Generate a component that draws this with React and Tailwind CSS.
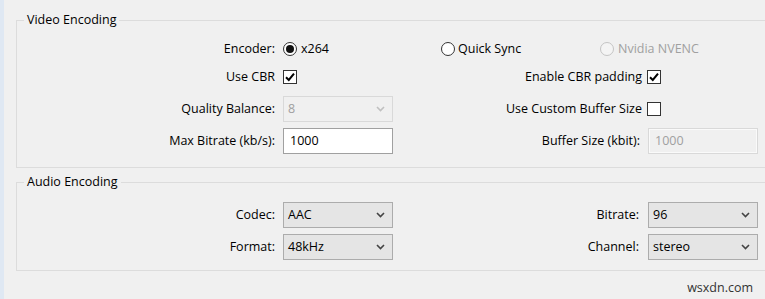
import React from "react";

const font = { fontFamily: '"Open Sans", "Noto Sans", sans-serif' };

function Radio({ checked, disabled }) {
  return (
    <span
      className={`w-[14px] h-[14px] rounded-full border flex items-center justify-center shrink-0 ${
        disabled ? "border-[#c4c4c4] bg-[#f4f4f4]" : "border-[#333] bg-white"
      }`}
    >
      {checked && <span className="w-[8px] h-[8px] rounded-full bg-[#111]" />}
    </span>
  );
}

function Check({ checked }) {
  return (
    <span className="w-[14px] h-[14px] border border-[#333] bg-white flex items-center justify-center shrink-0">
      {checked && (
        <svg width="12" height="12" viewBox="0 0 12 12">
          <path d="M2 6.2 L4.8 9 L10 2.6" fill="none" stroke="#000" strokeWidth="2" />
        </svg>
      )}
    </span>
  );
}

function Chevron({ disabled }) {
  return (
    <svg width="9" height="6" viewBox="0 0 9 6" className="shrink-0">
      <path d="M1 1 L4.5 4.5 L8 1" fill="none" stroke={disabled ? "#c0c0c0" : "#444"} strokeWidth="1.6" />
    </svg>
  );
}

function Select({ value, disabled }) {
  return (
    <div
      className={`w-[110px] h-[26px] border flex items-center justify-between pl-[4px] pr-[7px] ${
        disabled ? "border-[#d9d9d9] bg-[#f0f0f0] text-[#a0a0a0]" : "border-[#acacac] bg-[#e5e5e5] text-black"
      }`}
    >
      <span>{value}</span>
      <Chevron disabled={disabled} />
    </div>
  );
}

function Input({ value, disabled }) {
  return (
    <div
      className={`w-[110px] h-[26px] border flex items-center pl-[6px] ${
        disabled ? "border-[#d9d9d9] bg-[#f0f0f0] text-[#a0a0a0] shadow-[inset_0_0_0_1px_#fafafa]" : "border-[#a0a0a0] bg-white text-black"
      }`}
    >
      {value}
    </div>
  );
}

export default function App() {
  return (
    <div
      className="w-[765px] h-[299px] overflow-hidden bg-[#f0f0f0] flex text-[12.5px] leading-[16px] text-black"
      style={font}
    >
      <div className="w-[4px] h-full bg-[#dfe8f3] shrink-0" />
      <div className="flex-1 pl-[12px] pt-[12px] flex flex-col min-w-0">
        <fieldset className="border border-[#dcdcdc] mr-[-30px] pt-[10px] pb-[13px]">
          <legend className="ml-[7px] px-[3px] leading-[16px]">Video Encoding</legend>
          <div className="flex items-center h-[22px]">
            <div className="w-[258px] text-right">Encoder:</div>
            <div className="ml-[8px] flex items-center">
              <div className="w-[158px] flex items-center gap-[4px]">
                <Radio checked />
                <span>x264</span>
              </div>
              <div className="w-[159px] flex items-center gap-[3px]">
                <Radio />
                <span>Quick Sync</span>
              </div>
              <div className="flex items-center gap-[4px] text-[#a0a0a0]">
                <Radio disabled />
                <span>Nvidia NVENC</span>
              </div>
            </div>
          </div>
          <div className="flex items-center h-[22px] mt-[6px]">
            <div className="w-[258px] text-right">Use CBR</div>
            <div className="ml-[8px] w-[110px]">
              <Check checked />
            </div>
            <div className="w-[249px] text-right">Enable CBR padding</div>
            <div className="ml-[5px]">
              <Check checked />
            </div>
          </div>
          <div className="flex items-center h-[26px] mt-[8px]">
            <div className="w-[258px] text-right">Quality Balance:</div>
            <div className="ml-[8px]">
              <Select value="8" disabled />
            </div>
            <div className="w-[249px] text-right">Use Custom Buffer Size</div>
            <div className="ml-[5px]">
              <Check />
            </div>
          </div>
          <div className="flex items-center h-[26px] mt-[6px]">
            <div className="w-[258px] text-right">Max Bitrate (kb/s):</div>
            <div className="ml-[8px]">
              <Input value="1000" />
            </div>
            <div className="w-[247px] text-right">Buffer Size (kbit):</div>
            <div className="ml-[8px]">
              <Input value="1000" disabled />
            </div>
          </div>
        </fieldset>

        <fieldset className="border border-[#dcdcdc] mr-[-30px] mt-[6px] pt-[12px] pb-[10px]">
          <legend className="ml-[7px] px-[3px] leading-[16px]">Audio Encoding</legend>
          <div className="flex items-center h-[26px]">
            <div className="w-[258px] text-right">Codec:</div>
            <div className="ml-[8px]">
              <Select value="AAC" />
            </div>
            <div className="w-[246px] text-right">Bitrate:</div>
            <div className="ml-[9px]">
              <Select value="96" />
            </div>
          </div>
          <div className="flex items-center h-[26px] mt-[6px]">
            <div className="w-[258px] text-right">Format:</div>
            <div className="ml-[8px]">
              <Select value="48kHz" />
            </div>
            <div className="w-[246px] text-right">Channel:</div>
            <div className="ml-[9px]">
              <Select value="stereo" />
            </div>
          </div>
        </fieldset>

        <div className="flex justify-end pr-[12px] mt-[9px] text-[#333]">wsxdn.com</div>
      </div>
    </div>
  );
}
